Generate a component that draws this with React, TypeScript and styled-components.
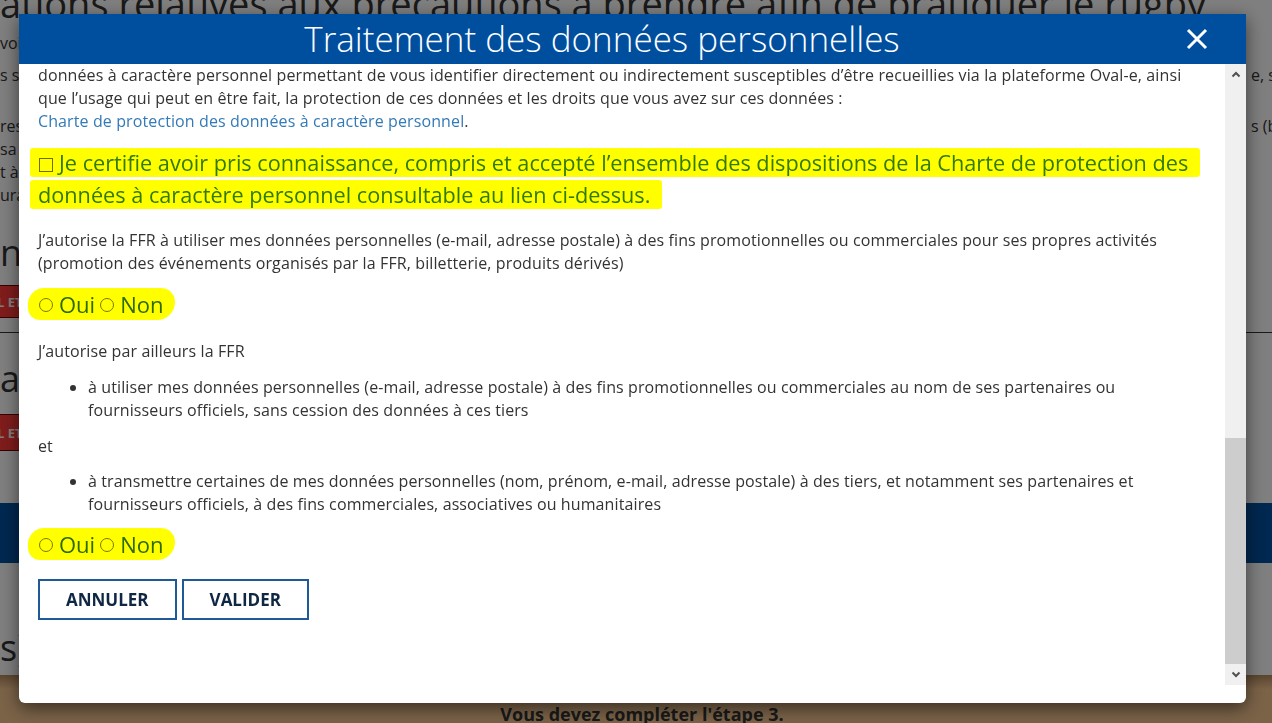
import styled, { createGlobalStyle } from "styled-components";

const GlobalStyle = createGlobalStyle`
  html, body {
    margin: 0;
    padding: 0;
    overflow: hidden;
    background: #ffffff;
    font-family: "Open Sans", "Liberation Sans", sans-serif;
  }
`;

// Page behind the modal
const Page = styled.div`
  width: 1272px;
  height: 723px;
  display: flex;
  flex-direction: column;
  color: #333333;
  overflow: hidden;
`;

const PageTitle = styled.h1`
  margin: -20px 0 0 0;
  font-size: 38px;
  line-height: 46px;
  font-weight: 400;
  white-space: nowrap;
`;

const PageRow = styled.div<{ $top: number }>`
  display: flex;
  justify-content: space-between;
  margin-top: ${(p) => p.$top}px;
  font-size: 16px;
  line-height: 23px;
  white-space: nowrap;
`;

const RightBit = styled.span`
  width: 21px;
  padding-left: 5px;
  overflow: hidden;
`;

const BigBit = styled.div<{ $top: number }>`
  margin-top: ${(p) => p.$top}px;
  font-size: 36px;
  line-height: 44px;
  white-space: nowrap;
`;

const RedButton = styled.div<{ $top: number; $h: number }>`
  margin-top: ${(p) => p.$top}px;
  width: 300px;
  height: ${(p) => p.$h}px;
  box-sizing: border-box;
  display: flex;
  align-items: center;
  padding-left: 0;
  background: #ff3838;
  border: 1px solid #6a0000;
  border-left: 0;
  color: #ffffff;
  font-weight: 700;
  font-size: 13px;
  white-space: pre;
  text-indent: -3px;
`;

const Rule = styled.hr`
  margin: 14px 0 0 0;
  border: 0;
  border-top: 1px solid #333333;
`;

const Band = styled.div`
  margin-top: 52px;
  height: 60px;
  background: #0050a0;
`;

const Footer = styled.footer`
  margin-top: auto;
  height: 48px;
  background: linear-gradient(#b48a5e, #f6c690 14px);
  text-align: center;
  padding: 27px 0 0 12px;
  box-sizing: border-box;
  font-weight: 700;
  font-size: 18px;
  line-height: 24px;
  color: #333333;
`;

// Modal
const Overlay = styled.div`
  position: fixed;
  inset: 0;
  background: rgba(0, 0, 0, 0.5);
  display: flex;
  padding: 14px 26px 20px 19px;
`;

const Modal = styled.div`
  flex: 1;
  display: flex;
  flex-direction: column;
  background: #ffffff;
  border-radius: 0 0 6px 6px;
  box-shadow: 0 5px 18px rgba(0, 0, 0, 0.55);
  overflow: hidden;
`;

const Header = styled.div`
  height: 50px;
  flex-shrink: 0;
  display: flex;
  align-items: center;
  background: #004f9f;
  color: #ffffff;
`;

const Title = styled.h2`
  flex: 1;
  margin: 0;
  text-align: center;
  font-size: 35px;
  font-weight: 300;
  line-height: 50px;
`;

const Close = styled.button`
  width: 24px;
  height: 24px;
  margin-right: 37px;
  padding: 0;
  border: 0;
  background: none;
  display: flex;
  align-items: center;
  justify-content: center;
`;

const Body = styled.div`
  flex: 1;
  display: flex;
  min-height: 0;
`;

const Scroll = styled.div`
  flex: 1;
  overflow: hidden;
  padding: 0 20px 0 19px;
  color: #333333;
  font-size: 16px;
  line-height: 23px;
  letter-spacing: 0.11px;
`;

const Para = styled.p<{ $mb: number }>`
  margin: 0 0 ${(p) => p.$mb}px 0;
`;

const Link = styled.a`
  color: #337ab7;
  text-decoration: none;
`;

const Certify = styled.div`
  margin: 0 0 18px -8px;
  font-size: 21.7px;
  line-height: 32px;
  letter-spacing: 0;
  color: #337a00;
`;

const Mark = styled.span`
  background: #ffff00;
  padding: 0 12px 0 8px;
  border-radius: 3px;
  -webkit-box-decoration-break: clone;
  box-decoration-break: clone;
`;

const Box = styled.span`
  display: inline-block;
  width: 14px;
  height: 14px;
  box-sizing: border-box;
  border: 1.5px solid #6e6e00;
  margin: 0 6px 0 1px;
  vertical-align: -1px;
`;

const RadioGroup = styled.div<{ $mb: number }>`
  display: inline-flex;
  align-items: center;
  height: 32px;
  margin: 0 0 ${(p) => p.$mb}px -10px;
  padding: 0 12px 0 11px;
  background: #ffff00;
  border-radius: 16px 14px 18px 12px;
  font-size: 22px;
  letter-spacing: 0;
  color: #2f6a00;
`;

const Radio = styled.span`
  width: 14px;
  height: 14px;
  box-sizing: border-box;
  border: 1.5px solid #7a7a00;
  border-radius: 50%;
  margin: 2px 6px 0 0;
`;

const Option = styled.span`
  margin-right: 5px;
  &:last-child {
    margin-right: 0;
  }
`;

const List = styled.ul<{ $mb: number }>`
  margin: 0 0 ${(p) => p.$mb}px 0;
  padding-left: 50px;
`;

const Actions = styled.div`
  display: flex;
  gap: 5px;
  padding-bottom: 20px;
`;

const Button = styled.button`
  height: 41px;
  padding: 0 26px;
  background: #ffffff;
  border: 2px solid #1d5a97;
  color: #0f2744;
  font-family: "Open Sans", "Liberation Sans", sans-serif;
  font-weight: 700;
  font-size: 17px;
`;

const ScrollBar = styled.div`
  width: 21px;
  display: flex;
  flex-direction: column;
  background: #f0f0f0;
`;

const Arrow = styled.div`
  height: 21px;
  display: flex;
  align-items: center;
  justify-content: center;
`;

const Track = styled.div`
  flex: 1;
  display: flex;
  flex-direction: column;
`;

const Thumb = styled.div`
  margin-top: auto;
  height: 226px;
  background: #cdcdcd;
`;

const BottomPad = styled.div`
  height: 18px;
  flex-shrink: 0;
`;

function Chevron({ up }: { up?: boolean }) {
  return (
    <svg width="10" height="7" viewBox="0 0 10 7">
      <path
        d={up ? "M1.5 5.5 L5 2 L8.5 5.5" : "M1.5 1.5 L5 5 L8.5 1.5"}
        fill="none"
        stroke="#505050"
        strokeWidth="2"
      />
    </svg>
  );
}

function Choice({ mb }: { mb: number }) {
  return (
    <div>
      <RadioGroup $mb={mb}>
        <Radio />
        <Option>Oui</Option>
        <Radio />
        <Option>Non</Option>
      </RadioGroup>
    </div>
  );
}

export default function App() {
  return (
    <>
      <GlobalStyle />
      <Page>
        <PageTitle>ations relatives aux précautions à prendre afin de pratiquer le rugby</PageTitle>
        <PageRow $top={6}>
          <span>voi</span>
        </PageRow>
        <PageRow $top={9}>
          <span>s s</span>
          <RightBit>e, s</RightBit>
        </PageRow>
        <PageRow $top={28}>
          <span>res</span>
          <RightBit>s (bo</RightBit>
        </PageRow>
        <PageRow $top={0}>
          <span>sa</span>
        </PageRow>
        <PageRow $top={0}>
          <span>t à</span>
        </PageRow>
        <PageRow $top={0}>
          <span>ura</span>
        </PageRow>
        <BigBit $top={24}>nt</BigBit>
        <RedButton $top={10} $h={33}>L ET</RedButton>
        <Rule />
        <BigBit $top={24}>at</BigBit>
        <RedButton $top={13} $h={37}>L ET</RedButton>
        <Band />
        <BigBit $top={63}>s)</BigBit>
        <Footer>Vous devez compléter l'étape 3.</Footer>
      </Page>

      <Overlay>
        <Modal>
          <Header>
            <Title>Traitement des données personnelles</Title>
            <Close aria-label="Fermer">
              <svg width="22" height="22" viewBox="0 0 22 22">
                <path d="M2 2 L20 20 M20 2 L2 20" stroke="#ffffff" strokeWidth="3" />
              </svg>
            </Close>
          </Header>
          <Body>
            <Scroll>
              <Para $mb={14}>
                données à caractère personnel permettant de vous identifier directement ou indirectement
                susceptibles d’être recueillies via la plateforme Oval-e, ainsi que l’usage qui peut en être
                fait, la protection de ces données et les droits que vous avez sur ces données :
                <br />
                <Link href="#">Charte de protection des données à caractère personnel</Link>.
              </Para>
              <Certify>
                <Mark>
                  <Box />
                  Je certifie avoir pris connaissance, compris et accepté l’ensemble des dispositions de la
                  Charte de protection des données à caractère personnel consultable au lien ci-dessus.
                </Mark>
              </Certify>
              <Para $mb={13}>
                J’autorise la FFR à utiliser mes données personnelles (e-mail, adresse postale) à des fins
                promotionnelles ou commerciales pour ses propres activités (promotion des événements organisés
                par la FFR, billetterie, produits dérivés)
              </Para>
              <Choice mb={20} />
              <Para $mb={13}>J’autorise par ailleurs la FFR</Para>
              <List $mb={13}>
                <li>
                  à utiliser mes données personnelles (e-mail, adresse postale) à des fins promotionnelles ou
                  commerciales au nom de ses partenaires ou fournisseurs officiels, sans cession des données à
                  ces tiers
                </li>
              </List>
              <Para $mb={12}>et</Para>
              <List $mb={12}>
                <li>
                  à transmettre certaines de mes données personnelles (nom, prénom, e-mail, adresse postale) à
                  des tiers, et notamment ses partenaires et fournisseurs officiels, à des fins commerciales,
                  associatives ou humanitaires
                </li>
              </List>
              <Choice mb={19} />
              <Actions>
                <Button>ANNULER</Button>
                <Button>VALIDER</Button>
              </Actions>
            </Scroll>
            <ScrollBar>
              <Arrow>
                <Chevron up />
              </Arrow>
              <Track>
                <Thumb />
              </Track>
              <Arrow>
                <Chevron />
              </Arrow>
            </ScrollBar>
          </Body>
          <BottomPad />
        </Modal>
      </Overlay>
    </>
  );
}
